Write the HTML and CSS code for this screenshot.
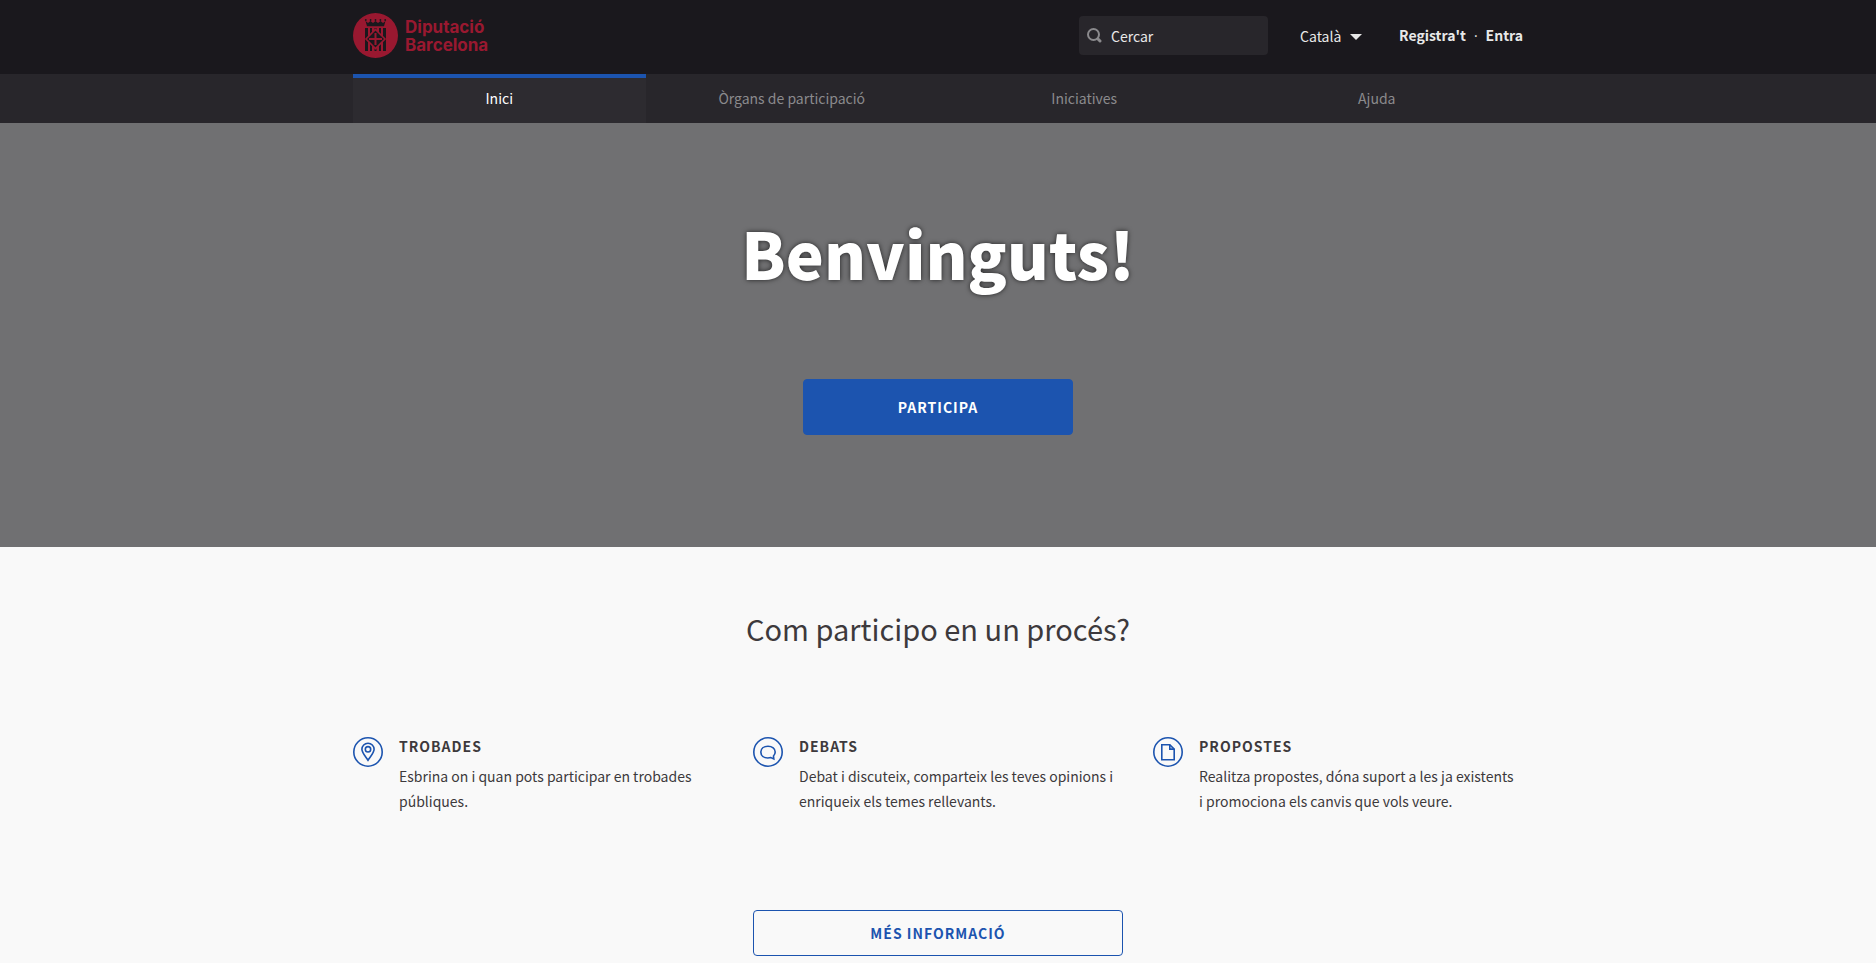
FILE: index.html
```html
<!DOCTYPE html>
<html lang="ca">
<head>
    <meta charset="UTF-8">
    <meta name="viewport" content="width=device-width, initial-scale=1.0">
    <title>Inici - Participa Diputació de Barcelona</title>
    <link rel="stylesheet" href="styles.css">
</head>
<body>
    <header>
        <div class="title-bar">
            <div class="row title-bar-row">
                <a class="logo" href="#">
                    <svg class="logo-shield" viewBox="0 0 45 45" aria-hidden="true">
                        <circle cx="22.500" cy="22.500" r="22.500" fill="#991830"/>
                        <g fill="#1a181d">
                            <!-- crown -->
                            <path d="M12.500 8l2.500 2 2.500-2 2.500 2 2.500-2 2.500 2 2.500-2 2.500 2 2.500-2-1.500 5.300H14z"/>
                            <circle cx="12.800" cy="7" r=".9"/>
                            <circle cx="17.600" cy="7" r=".9"/>
                            <circle cx="22.500" cy="7" r=".9"/>
                            <circle cx="27.400" cy="7" r=".9"/>
                            <circle cx="32.200" cy="7" r=".9"/>
                            <!-- stripes -->
                            <path d="M12 15h3v23h-3zM17 15h2v23h-2zM21.500 15h2v23h-2zM26 15h2v23h-2zM30 15h3v23h-3z"/>
                        </g>
                        <!-- diamond with the cross -->
                        <path d="M22.500 16.500L32 26 22.500 35.500 13 26z" fill="#1a181d" stroke="#991830" stroke-width="1.600"/>
                        <path d="M21.500 20h2v5h5.500v2h-5.500v5h-2v-5H16v-2h5.500z" fill="#991830"/>
                    </svg>
                    <span class="logo-name">Diputació<br>Barcelona</span>
                </a>
                <form class="search">
                    <svg class="search-icon" viewBox="0 0 15 15" aria-hidden="true">
                        <circle cx="6.500" cy="6.500" r="5.500"/>
                        <path d="M11 11l2 2" class="search-handle"/>
                    </svg>
                    <input type="search" placeholder="Cercar" aria-label="Cercar">
                </form>
                <div class="language">
                    <select aria-label="Tria l'idioma">
                        <option>Català</option>
                        <option>Castellano</option>
                    </select>
                    <svg class="caret" viewBox="0 0 12 6" aria-hidden="true"><path d="M0 0h12L6 6z"/></svg>
                </div>
                <div class="user-links">
                    <a href="#">Registra't</a>
                    <span class="dot">·</span>
                    <a href="#">Entra</a>
                </div>
            </div>
        </div>
        <nav class="navbar">
            <ul class="row main-nav">
                <li class="active"><a href="#">Inici</a></li>
                <li><a href="#">Òrgans de participació</a></li>
                <li><a href="#">Iniciatives</a></li>
                <li><a href="#">Ajuda</a></li>
            </ul>
        </nav>
    </header>

    <main>
        <section class="hero">
            <h1>Benvinguts!</h1>
            <a class="button" href="#">Participa</a>
        </section>

        <section class="how-to">
            <div class="row">
                <h2>Com participo en un procés?</h2>
                <div class="features">
                    <div class="feature">
                        <svg class="feature-icon" viewBox="0 0 30 30" aria-hidden="true">
                            <circle cx="15" cy="15" r="14.200"/>
                            <path d="M15 23.300C13 20 8.900 16 8.900 12.300a6.100 6.100 0 0 1 12.200 0C21.100 16 17 20 15 23.300z"/>
                            <circle cx="15" cy="12.300" r="2.700"/>
                        </svg>
                        <div>
                            <h3>Trobades</h3>
                            <p>Esbrina on i quan pots participar en trobades públiques.</p>
                        </div>
                    </div>
                    <div class="feature">
                        <svg class="feature-icon" viewBox="0 0 30 30" aria-hidden="true">
                            <circle cx="15" cy="15" r="14.200"/>
                            <path d="M17.800 20.600c-1 .3-2 .4-3 .4-4 0-7-2.400-7-5.900s3-5.800 7.200-5.800 7.200 2.500 7.200 5.800c0 1.600-.6 2.900-1.700 3.900l.3 2.900z"/>
                        </svg>
                        <div>
                            <h3>Debats</h3>
                            <p>Debat i discuteix, comparteix les teves opinions i enriqueix els temes rellevants.</p>
                        </div>
                    </div>
                    <div class="feature">
                        <svg class="feature-icon" viewBox="0 0 30 30" aria-hidden="true">
                            <circle cx="15" cy="15" r="14.200"/>
                            <path d="M8.800 7.700h8l4.400 4.400v10.600H8.800z"/>
                            <path d="M16.800 7.700v4.400h4.400"/>
                        </svg>
                        <div>
                            <h3>Propostes</h3>
                            <p>Realitza propostes, dóna suport a les ja existents i promociona els canvis que vols veure.</p>
                        </div>
                    </div>
                </div>
                <a class="button hollow" href="#">Més informació</a>
            </div>
        </section>
    </main>
</body>
</html>
```

FILE: styles.css
```css
* {
    box-sizing: border-box;
}
body {
    margin: 0;
    background: #f9f9f9;
    color: #3d393c;
    font-family: "Noto Sans CJK SC", "Noto Sans", sans-serif;
    font-size: 14px;
    line-height: 25px;
}
a {
    color: inherit;
    text-decoration: none;
}
h1, h2, h3, p, ul {
    margin: 0;
    padding: 0;
}
.row {
    max-width: 1170px;
    margin: 0 auto;
}

/* Header */
.title-bar {
    background: #1a181d;
    color: #e8e8e8;
}
.title-bar-row {
    display: flex;
    align-items: center;
    height: 74px;
    padding-bottom: 3px;
}
.logo {
    display: flex;
    align-items: center;
    gap: 7px;
    margin-right: auto;
    color: #991830;
}
.logo-shield {
    width: 45px;
    height: 45px;
}
.logo-name {
    font-family: Inter, "Liberation Sans", sans-serif;
    font-size: 17px;
    font-weight: 700;
    line-height: 18px;
}
.search {
    display: flex;
    align-items: center;
    width: 189px;
    height: 39px;
    padding: 0 8px;
    gap: 9px;
    background: #28262b;
    border-radius: 4px;
}
.search-icon {
    flex: none;
    width: 15px;
    height: 15px;
    fill: none;
    stroke: #8b8a8d;
    stroke-width: 2;
}
.search-handle {
    stroke-width: 3;
    stroke-linecap: round;
}
.search input {
    width: 100%;
    padding: 2px 0 0;
    border: 0;
    outline: 0;
    background: none;
    color: inherit;
    font: inherit;
    appearance: none;
}
.search input::placeholder {
    color: #e8e8e8;
    opacity: 1;
}
.language {
    display: flex;
    align-items: center;
    position: relative;
    margin-left: 32px;
}
.language select {
    width: 62px;
    padding: 2px 0 0;
    border: 0;
    background: none;
    color: inherit;
    font: inherit;
    appearance: none;
}
.language option {
    color: #3d393c;
}
.caret {
    position: absolute;
    right: 0;
    width: 12px;
    height: 6px;
    margin-top: 3px;
    fill: #e8e8e8;
    pointer-events: none;
}
.user-links {
    display: flex;
    gap: 8px;
    margin-left: 37px;
    font-weight: 700;
}
.dot {
    font-family: "Open Sans", sans-serif;
    font-weight: 400;
}

/* Main navigation */
.navbar {
    background: #28262b;
}
.main-nav {
    display: flex;
    list-style: none;
}
.main-nav li {
    flex: 1;
}
.main-nav a {
    display: block;
    padding: 8px 0 12px;
    border-top: 4px solid transparent;
    color: #8b8a8d;
    text-align: center;
}
.main-nav .active a {
    background: #2d2b30;
    border-top-color: #1c54af;
    color: #fff;
}

/* Hero */
.hero {
    display: flex;
    flex-direction: column;
    align-items: center;
    padding: 83px 0 112px;
    background: #707072;
}
.hero h1 {
    margin-bottom: 81px;
    color: #fff;
    font-size: 64px;
    font-weight: 900;
    line-height: 92px;
    text-shadow: 0 0 5px rgba(0, 0, 0, 0.7);
}
.button {
    display: block;
    width: 270px;
    padding: 15px;
    border: 1px solid #1c54af;
    border-radius: 4px;
    background: #1c54af;
    color: #fff;
    font-weight: 600;
    letter-spacing: 1px;
    line-height: 24px;
    text-align: center;
    text-transform: uppercase;
}

/* How to participate */
.how-to {
    padding-top: 60px;
}
.how-to h2 {
    margin-bottom: 85px;
    font-size: 29px;
    font-weight: 400;
    line-height: 42px;
    text-align: center;
}
.features {
    display: grid;
    grid-template-columns: repeat(3, 1fr);
    gap: 30px;
    margin-bottom: 96px;
}
.feature {
    display: flex;
    gap: 16px;
    padding-right: 4px;
}
.feature-icon {
    flex: none;
    width: 30px;
    height: 30px;
    margin-top: 3px;
    fill: none;
    stroke: #1c54af;
    stroke-width: 1.6;
}
.feature h3 {
    margin-bottom: 5px;
    font-size: 14px;
    font-weight: 600;
    letter-spacing: 1px;
    text-transform: uppercase;
}
.button.hollow {
    width: 370px;
    margin: 0 auto;
    padding: 10px;
    background: none;
    color: #1c54af;
}
```
